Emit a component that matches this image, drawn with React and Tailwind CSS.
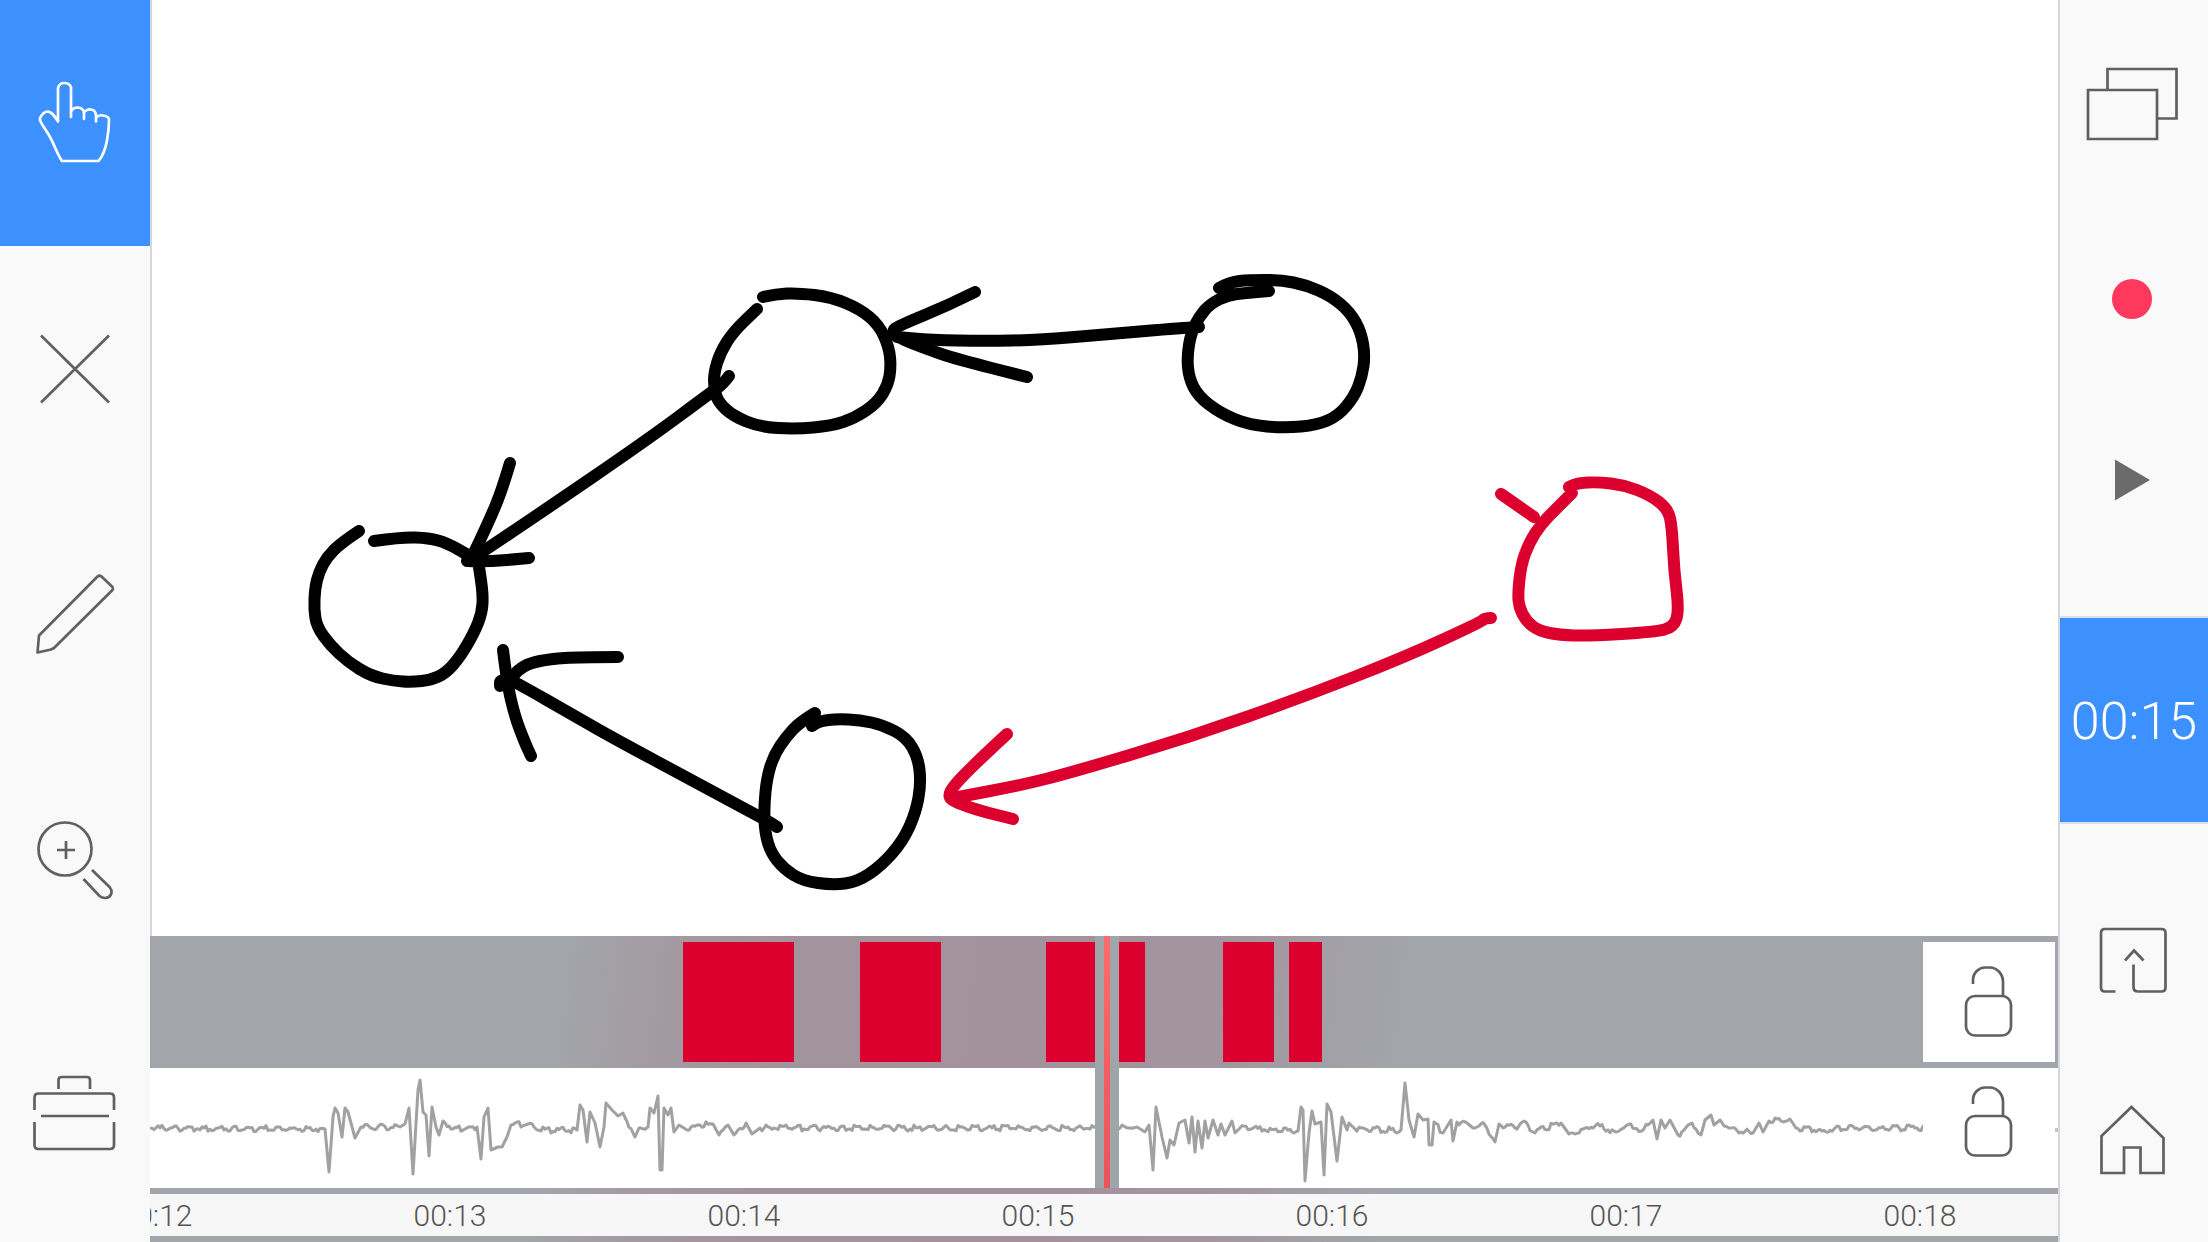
import React from "react";

/* Pen line: each sampled point pulls a curve that runs between segment midpoints. */
function smooth(points) {
  let d = `M${points[0][0]} ${points[0][1]}`;
  for (let i = 1; i < points.length - 1; i++) {
    const [x, y] = points[i];
    const [nx, ny] = points[i + 1];
    d += `Q${x} ${y} ${(x + nx) / 2} ${(y + ny) / 2}`;
  }
  const last = points[points.length - 1];
  return `${d}L${last[0]} ${last[1]}`;
}

const BLACK_STROKES = [
  // left node
  [[359,531],[341,543],[327,557],[319,572],[315,588],[314,610],[317,627],[330,645],[348,662],[371,676],[394,681],[412,682],[431,680],[446,673],[460,657],[474,633],[482,613],[483,594],[479,567]],
  [[374,541],[402,537],[429,538],[447,543],[468,555]],
  // upper middle node
  [[763,297],[776,294],[798,293],[831,297],[860,309],[879,325],[889,347],[891,367],[888,385],[877,403],[855,418],[831,426],[796,429],[760,427],[733,416],[718,402],[714,388],[714,373],[720,353],[733,332],[757,309]],
  // upper right node
  [[1219,288],[1230,282],[1249,280],[1281,280],[1306,285],[1331,296],[1350,312],[1361,332],[1365,355],[1362,377],[1354,397],[1338,416],[1317,425],[1285,428],[1249,425],[1220,413],[1198,396],[1189,378],[1187,357],[1191,333],[1199,317],[1210,304],[1228,295],[1246,293],[1269,291]],
  // lower node
  [[815,713],[800,722],[786,737],[774,755],[767,777],[764,807],[765,833],[771,853],[784,869],[803,881],[833,885],[857,882],[881,866],[903,841],[916,812],[921,783],[918,757],[906,737],[883,725],[860,720],[837,719],[820,721],[812,726]],
  // arrow: upper middle to left
  [[729,376],[723,384],[713,391],[647,440],[533,518],[473,558]],
  [[510,463],[502,490],[490,519],[472,557]],
  [[467,561],[484,562],[529,558]],
  // arrow: upper right to upper middle
  [[1199,327],[1181,328],[1110,334],[1039,340],[985,341],[931,340],[897,337]],
  [[975,292],[949,305],[898,326],[892,331],[899,338],[924,348],[956,359],[1027,377]],
  // arrow: lower to left
  [[777,827],[770,822],[760,817],[697,783],[613,738],[573,715],[517,683],[509,680],[500,680],[500,686]],
  [[503,650],[507,683],[515,717],[525,743],[531,756]],
  [[618,657],[580,657],[550,659],[530,663],[518,670],[512,678]],
];

const RED_STROKES = [
  [[1572,493],[1558,507],[1541,524],[1529,543],[1521,565],[1518,593],[1519,607],[1526,621],[1539,631],[1560,635],[1588,636],[1655,632],[1674,627],[1679,610],[1674,570],[1672,527],[1668,509],[1650,495],[1624,485],[1598,482],[1578,483],[1569,487]],
  [[1501,494],[1534,517]],
  [[1491,618],[1485,618],[1481,622],[1405,657],[1303,697],[1190,737],[1073,772],[1022,785],[953,798]],
  [[1007,734],[981,758],[953,786],[948,797],[957,803],[981,811],[1013,819]],
];

/* Waveform peaks: x position, distance from the mid line. */
const PEAKS = [
  [150,0],[325,1],[329,44],[333,-11],[335,-20],[338,-15],[342,9],[345,-20],[348,-16],[355,10],[361,-1],[400,-1],[405,-4],[409,-20],[413,46],[418,-38],[420,-48],[423,-16],[426,-13],[429,28],[432,-21],[436,-1],[439,7],[443,-7],[453,1],[477,-1],[481,31],[484,-11],[488,-20],[491,22],[498,19],[502,19],[507,9],[511,-3],[528,-4],[537,2],[577,2],[580,-23],[583,-18],[587,14],[590,-16],[595,-5],[600,19],[604,-1],[606,-25],[612,-18],[618,-12],[623,-15],[635,9],[639,0],[648,-1],[650,-20],[654,-15],[658,-32],[660,42],[662,42],[664,-20],[668,-13],[671,-20],[674,4],[679,-3],[687,2],[700,-3],[713,-4],[719,7],[728,-3],[734,7],[746,-5],[752,6],[760,0],[1120,0],[1137,-1],[1145,4],[1149,-3],[1153,42],[1156,-21],[1162,9],[1167,30],[1170,12],[1174,17],[1179,-5],[1185,-8],[1189,15],[1192,-11],[1195,24],[1198,-7],[1202,20],[1205,-7],[1208,10],[1213,-8],[1218,7],[1221,-4],[1225,7],[1232,-7],[1235,5],[1240,0],[1298,3],[1301,-21],[1303,-18],[1305,53],[1309,5],[1312,-17],[1315,-4],[1321,-6],[1324,47],[1327,-24],[1331,-16],[1337,33],[1342,-11],[1347,2],[1349,-5],[1355,1],[1401,2],[1405,-45],[1409,-8],[1414,9],[1418,-14],[1423,-8],[1428,-9],[1429,17],[1432,17],[1434,-6],[1443,5],[1451,-8],[1453,13],[1457,-6],[1467,-5],[1473,0],[1485,-3],[1495,14],[1499,-4],[1515,0],[1524,-7],[1533,4],[1561,-5],[1569,6],[1596,-3],[1616,4],[1629,-4],[1642,3],[1653,-8],[1657,11],[1661,-8],[1665,0],[1670,-8],[1678,7],[1692,-5],[1701,7],[1705,-8],[1711,-13],[1714,-3],[1720,-8],[1729,0],[1753,5],[1759,-5],[1763,4],[1769,-7],[1790,-9],[1796,0],[1822,3],[1835,0],[2058,0],
];

function wavePath() {
  const out = [];
  for (let i = 0; i < PEAKS.length - 1; i++) {
    const [x1, y1] = PEAKS[i];
    const [x2, y2] = PEAKS[i + 1];
    out.push(`${x1} ${y1}`);
    if (x2 - x1 > 8) {
      for (let x = x1 + 2; x < x2 - 1; x += 2) {
        const n = (Math.sin(x * 12.9898) * 43758.5453) % 1;
        out.push(`${x} ${(y1 + ((y2 - y1) * (x - x1)) / (x2 - x1) + n * 3).toFixed(1)}`);
      }
    }
  }
  return "M" + out.join("L");
}

function Icon({ box, className = "size-20", children }) {
  return (
    <svg viewBox={box} className={`overflow-visible fill-none ${className}`} stroke="currentColor" strokeWidth="2.7" aria-hidden="true">
      {children}
    </svg>
  );
}

const TOOLS = [
  {
    label: "Select",
    active: true,
    icon: (
      <Icon box="35 83 80 80">
        <path strokeLinejoin="round" d="M40 118C42 114 45 111.500 48 111.500C52 112 54 115.500 58 121.500V88C59 84.500 61.500 83 64 83C67.500 83 70 84.500 71 87V117V112C72 109 75 107.500 78 107.500C81 108 84 109.500 84 113V119V113C85 110.500 88 109 91 109.500C94 110 96 112 96 116V121.500V117.500C98 115.500 101 115 103 115.500C106 116 109 117 109 119.500C109 130 107 152 98.500 161H62C57 154 55 146 50.500 138C47 131 41 124 40 120Z" />
      </Icon>
    ),
  },
  {
    label: "Close",
    icon: (
      <Icon box="35 329 80 80">
        <path d="M41 335.500L109 402.500M109 335.500L41 402.500" />
      </Icon>
    ),
  },
  {
    label: "Draw",
    icon: (
      <Icon box="35 575 80 80">
        <path strokeLinejoin="round" d="M97.500 576.500Q99.500 575 101.500 576.500L112.500 587Q113.500 589 112.500 590L54 648L51 649.500L37.500 652.500L39 635.500Z" />
      </Icon>
    ),
  },
  {
    label: "Zoom in",
    icon: (
      <Icon box="35 821 80 80">
        <circle cx="65" cy="849" r="26.500" />
        <path d="M57 850H75M66 841V859M92 870L110 887.500Q112 890 111.500 893Q110 898 105 898Q102 898 99.500 896L83.500 879" />
      </Icon>
    ),
  },
  {
    label: "Toolbox",
    icon: (
      <Icon box="35 1073 80 80">
        <path d="M58.500 1089V1080Q58.500 1077 61.500 1077H87Q90 1077 90 1080V1089M34.500 1110V1097.500Q34.500 1093.500 38.500 1093.500H110Q114 1093.500 114 1097.500V1110M41 1116H109M34.500 1122V1145Q34.500 1149 38.500 1149H110Q114 1149 114 1145V1122" />
      </Icon>
    ),
  },
];

const CLIPS = [
  "ml-[533px] w-[111px]",
  "ml-[66px] w-[81px]",
  "ml-[105px] w-[99px]",
  "ml-[78px] w-[51px]",
  "ml-[15px] w-[33px]",
];

const TICKS = ["00:12", "00:13", "00:14", "00:15", "00:16", "00:17", "00:18"];

function LockButton({ label, className = "" }) {
  return (
    <button type="button" aria-label={label} className={`ml-auto flex h-[120px] w-[132px] shrink-0 items-center justify-center bg-white text-[#606060] ${className}`}>
      <Icon box="1950 963 80 80">
        <rect x="1967" y="997" width="45" height="39.500" rx="9" />
        <path d="M1974 985V981C1974 973.500 1980 968.500 1986 968.500H1991C1998 968.500 2004 975 2004 983V997" />
      </Icon>
    </button>
  );
}

function Timeline() {
  return (
    <section
      aria-label="Timeline"
      className="flex shrink-0 flex-col gap-1.5 overflow-hidden bg-[linear-gradient(97deg,#a2a6aa_0%,#a2a6aa_21%,#a39aa1_27%,#a3939c_33%,#a3929b_48%,#a3959e_56%,#a2a0a6_61%,#a2a6aa_66%)] py-1.5"
    >
      <div className="relative -mt-1.5 flex flex-col gap-1.5 pt-1.5">
        <div className="flex h-[120px]">
          {CLIPS.map((c, i) => (
            <button key={c} type="button" aria-label={`Clip ${i + 1}`} className={`h-full shrink-0 bg-[#dc002e] ${c}`} />
          ))}
          <LockButton label="Lock drawing track" className="mr-[3px]" />
        </div>
        <div className="flex h-[120px] overflow-hidden bg-white">
          <div className="min-w-0 flex-1 overflow-hidden">
            <svg viewBox="150 -60 1773 120" className="h-[120px] w-[1773px] fill-none" role="img" aria-label="Audio waveform">
              <path d={wavePath()} stroke="#828282" strokeOpacity="0.75" strokeWidth="3" strokeLinejoin="round" />
            </svg>
          </div>
          <LockButton label="Lock audio track" className="pb-3" />
          <div className="mt-[60px] h-1 w-[3px] shrink-0 bg-[#c4c4c4]" />
        </div>
        <div className="absolute inset-y-0 left-[945px] flex w-6 justify-center bg-[#9fa6aa]">
          <div className="w-1.5 bg-linear-to-b from-[#ff6a6d] to-[#ec5356]" />
        </div>
      </div>
      <div className="h-[42px] overflow-hidden bg-[#f7f7f7]">
        <ol className="-ml-[141px] flex">
          {TICKS.map((t) => (
            <li key={t} className="w-[294px] shrink-0 text-center text-[30px] leading-[44px] font-light text-[#555]">
              {t}
            </li>
          ))}
        </ol>
      </div>
    </section>
  );
}

export default function App() {
  return (
    <div className="flex h-screen overflow-hidden bg-white font-['Roboto','Liberation_Sans',sans-serif] text-[#606060]">
      <nav aria-label="Tools" className="flex w-[150px] shrink-0 flex-col bg-[#f9f9f9]">
        {TOOLS.map((t) => (
          <button
            key={t.label}
            type="button"
            aria-label={t.label}
            className={`flex h-[246px] items-center justify-center last:h-auto last:flex-1 ${t.active ? "bg-[#3c91ff] text-white" : ""}`}
          >
            {t.icon}
          </button>
        ))}
      </nav>

      <main className="flex min-w-0 flex-1 flex-col">
        <div className="min-h-0 flex-1 border-l-2 border-[#d5d5e2]">
          <svg viewBox="152 0 1906 936" className="size-full fill-none" role="img" aria-label="Drawing canvas" strokeWidth="12" strokeLinecap="round" strokeLinejoin="round">
            <g stroke="#000">
              {BLACK_STROKES.map((s, i) => (
                <path key={i} d={smooth(s)} />
              ))}
            </g>
            <g stroke="#dc002e">
              {RED_STROKES.map((s, i) => (
                <path key={i} d={smooth(s)} />
              ))}
            </g>
          </svg>
        </div>
        <Timeline />
      </main>

      <aside aria-label="Playback" className="flex w-[150px] shrink-0 flex-col border-l-2 border-[#d5d5de] bg-[#f9f9f9]">
        <button type="button" aria-label="Slides" className="flex h-[208px] items-center justify-center">
          <Icon box="2084 54 100 100" className="size-[100px]">
            <path d="M2088 90H2157V139H2088ZM2107.500 90V69H2176.500V118.500H2157" />
          </Icon>
        </button>
        <button type="button" aria-label="Record" className="flex h-[182px] items-center justify-center pr-1">
          <span className="size-10 rounded-full bg-[#ff385e]" />
        </button>
        <button type="button" aria-label="Play" className="mb-[46px] flex h-[180px] items-center justify-center">
          <Icon box="2094 440 80 80">
            <path d="M2115 459.500L2150 480L2115 500.500Z" fill="#6b6b6b" stroke="none" />
          </Icon>
        </button>
        <button type="button" className="flex h-[208px] items-center justify-center border-y-2 border-[#dcdce6] bg-[#3c91ff] pt-1 text-[52px] leading-none font-light text-white">
          00:15
        </button>
        <button type="button" aria-label="Export" className="mt-[46px] flex h-[180px] items-center justify-center">
          <Icon box="2094 920 80 80">
            <path d="M2115.500 991.500H2105Q2101 991.500 2101 987.500V933Q2101 929 2105 929H2161.500Q2165.500 929 2165.500 933V987.500Q2165.500 991.500 2161.500 991.500H2138Q2133.500 991.500 2133.500 987V964.500M2125 960.500L2134 950.500L2143.500 960.500" />
          </Icon>
        </button>
        <button type="button" aria-label="Home" className="flex h-[180px] items-center justify-center">
          <Icon box="2094 1100 80 80">
            <path d="M2131.500 1107L2163.500 1138V1173H2140.500V1147.500H2124V1173H2101.500V1136Z" />
          </Icon>
        </button>
      </aside>
    </div>
  );
}
